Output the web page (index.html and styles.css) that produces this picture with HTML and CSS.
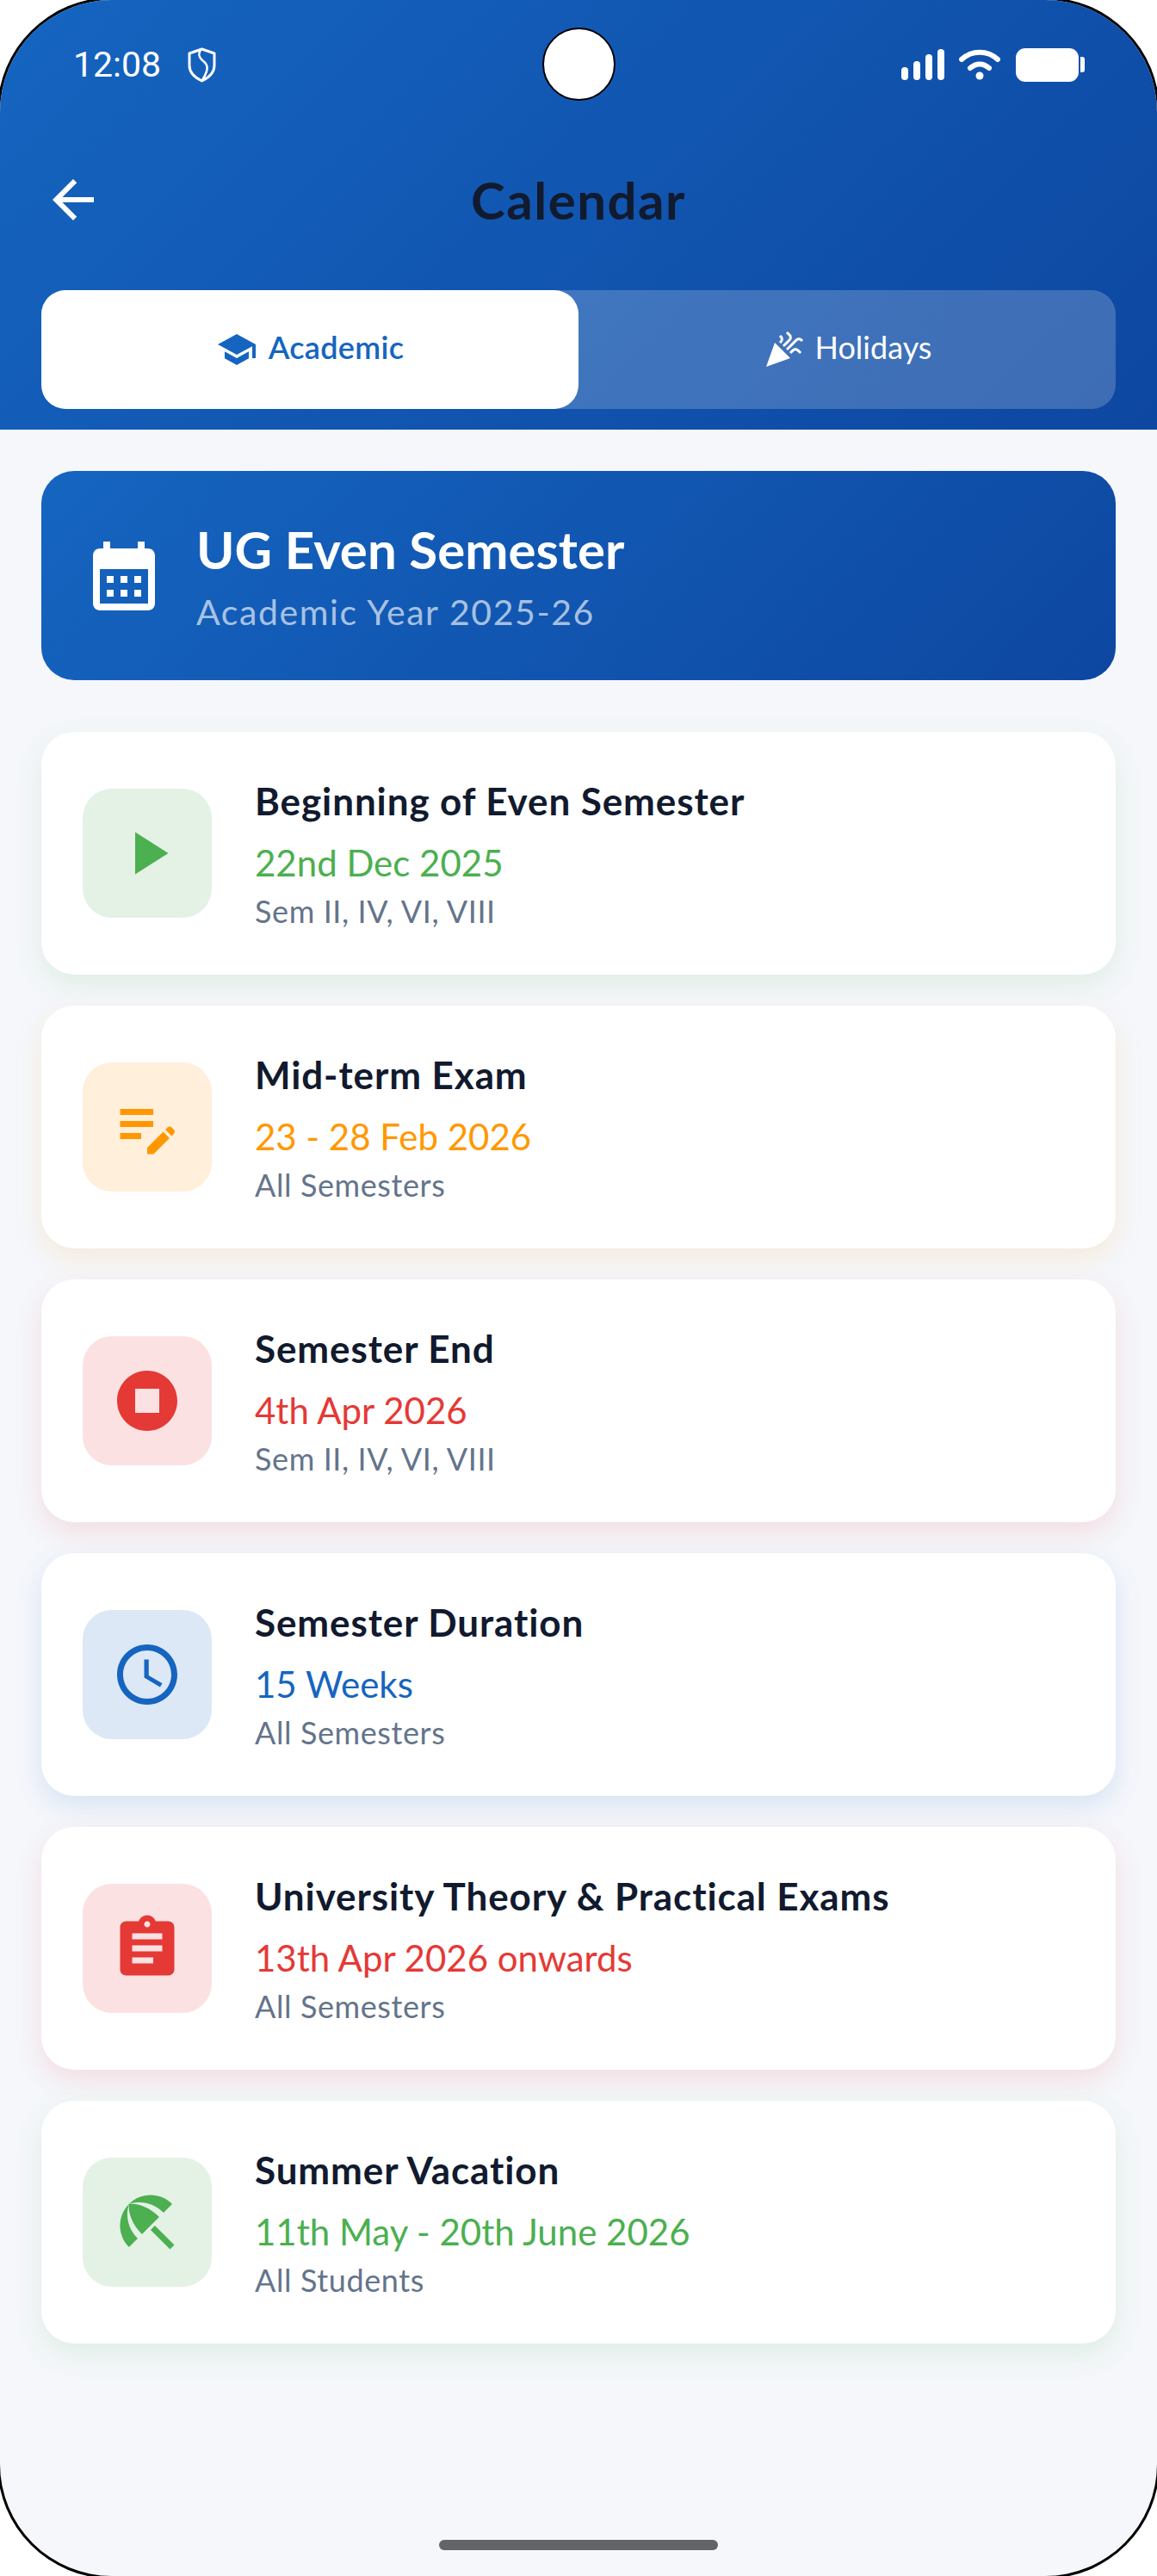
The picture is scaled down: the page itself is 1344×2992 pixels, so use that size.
FILE: index.html
```html
<!DOCTYPE html>
<html lang="en">
<head>
  <meta charset="UTF-8">
  <meta name="viewport" content="width=device-width, initial-scale=1.0">
  <title>Calendar</title>
  <link rel="stylesheet" href="styles.css">
</head>
<body>
<div class="phone">
  <div class="camera"></div>

  <header class="top">
    <div class="status">
      <div class="status-left">
        <span class="clock">12:08</span>
        <svg class="shield" viewBox="0 0 33 41" fill="none" stroke="#fff" stroke-width="3" stroke-linejoin="round" stroke-linecap="round">
          <path d="M16.5 2 31 7v14c0 8-6 14-14.500 18C8 35 2 29 2 21V7z"/>
          <path d="M15 3c-3 5-2 8 2 12 4 3 7 6 5 13-1 3-3 7-5 10" stroke-width="2.500"/>
        </svg>
      </div>
      <div class="status-right">
        <div class="signal">
          <span class="bar bar1"></span>
          <span class="bar bar2"></span>
          <span class="bar bar3"></span>
          <span class="bar bar4"></span>
        </div>
        <svg class="wifi" viewBox="0 0 48 36" fill="none" stroke="#fff" stroke-width="6" stroke-linecap="round">
          <path d="M3 12C15 1 33 1 45 12"/>
          <path d="M13 22c7-6 15-6 22 0"/>
          <circle cx="24" cy="31" r="4.500" fill="#fff" stroke="none"/>
        </svg>
        <div class="battery"></div>
        <div class="battery-nub"></div>
      </div>
    </div>

    <div class="toolbar">
      <svg class="back" viewBox="0 0 24 24"><path d="M20 11H7.830l5.590-5.590L12 4l-8 8 8 8 1.410-1.410L7.830 13H20v-2z"/></svg>
      <h1>Calendar</h1>
    </div>

    <div class="tabs">
      <div class="tab active">
        <svg viewBox="0 0 24 24"><path d="M5 13.180v4L12 21l7-3.820v-4L12 17l-7-3.820zM12 3L1 9l11 6 9-4.910V17h2V9L12 3z"/></svg>
        <span>Academic</span>
      </div>
      <div class="tab">
        <svg viewBox="0 0 24 24"><path d="M2 22l14-5-9-9zm12.530-9.470l5.590-5.590c.49-.49 1.280-.49 1.770 0l.59.59 1.060-1.060-.59-.59c-1.070-1.070-2.820-1.070-3.890 0l-5.590 5.590 1.060 1.060zm-4.470-5.650l-.59.59 1.060 1.060.59-.59c1.070-1.070 1.070-2.820 0-3.890l-.59-.59-1.060 1.070.59.59c.48.48.48 1.280 0 1.760zm7 5l-1.590 1.590 1.060 1.060 1.590-1.590c.49-.49 1.280-.49 1.770 0l1.610 1.610 1.060-1.060-1.610-1.610c-1.080-1.070-2.820-1.070-3.890 0zm-2-6l-3.590 3.590 1.060 1.060 3.590-3.590c1.070-1.070 1.070-2.820 0-3.890l-1.590-1.590-1.060 1.060 1.590 1.590c.48.490.48 1.290 0 1.770z"/></svg>
        <span>Holidays</span>
      </div>
    </div>
  </header>

  <main class="content">
    <section class="banner">
      <svg viewBox="0 0 24 24"><path d="M19 4h-1V2h-2v2H8V2H6v2H5c-1.110 0-1.990.9-1.990 2L3 20c0 1.100.89 2 2 2h14c1.100 0 2-.9 2-2V6c0-1.100-.9-2-2-2zm0 16H5V10h14v10zM9 14H7v-2h2v2zm4 0h-2v-2h2v2zm4 0h-2v-2h2v2zm-8 4H7v-2h2v2zm4 0h-2v-2h2v2zm4 0h-2v-2h2v2z"/></svg>
      <div>
        <h2>UG Even Semester</h2>
        <p>Academic Year 2025-26</p>
      </div>
    </section>

    <article class="card green">
      <div class="card-icon">
        <svg viewBox="0 0 24 24"><path d="M8 5v14l11-7z"/></svg>
      </div>
      <div class="card-text">
        <h3>Beginning of Even Semester</h3>
        <p class="date">22nd Dec 2025</p>
        <p class="who">Sem II, IV, VI, VIII</p>
      </div>
    </article>

    <article class="card orange">
      <div class="card-icon">
        <svg viewBox="0 0 24 24"><path d="M3 10h11v2H3v-2zM3 8h11V6H3v2zM3 16h7v-2H3v2zM18.010 12.870l.7-.7c.39-.39 1.020-.39 1.410 0l.71.71c.39.39.39 1.020 0 1.410l-.71.71-2.110-2.130zM17.300 13.580l-5.300 5.300V21h2.120l5.300-5.300-2.120-2.120z"/></svg>
      </div>
      <div class="card-text">
        <h3>Mid-term Exam</h3>
        <p class="date">23 - 28 Feb 2026</p>
        <p class="who">All Semesters</p>
      </div>
    </article>

    <article class="card red">
      <div class="card-icon">
        <svg viewBox="0 0 24 24"><path d="M12 2C6.480 2 2 6.480 2 12s4.480 10 10 10 10-4.480 10-10S17.520 2 12 2zm4 14H8V8h8v8z"/></svg>
      </div>
      <div class="card-text">
        <h3>Semester End</h3>
        <p class="date">4th Apr 2026</p>
        <p class="who">Sem II, IV, VI, VIII</p>
      </div>
    </article>

    <article class="card blue">
      <div class="card-icon">
        <svg viewBox="0 0 24 24"><path d="M11.990 2C6.470 2 2 6.480 2 12s4.470 10 9.990 10C17.520 22 22 17.520 22 12S17.520 2 11.990 2zM12 20c-4.420 0-8-3.580-8-8s3.580-8 8-8 8 3.580 8 8-3.580 8-8 8zm.5-13H11v6l5.250 3.150.75-1.230-4.500-2.670z"/></svg>
      </div>
      <div class="card-text">
        <h3>Semester Duration</h3>
        <p class="date">15 Weeks</p>
        <p class="who">All Semesters</p>
      </div>
    </article>

    <article class="card red">
      <div class="card-icon">
        <svg viewBox="0 0 24 24"><path d="M19 3h-4.180C14.400 1.840 13.300 1 12 1c-1.300 0-2.400.84-2.820 2H5c-1.100 0-2 .9-2 2v14c0 1.100.9 2 2 2h14c1.100 0 2-.9 2-2V5c0-1.100-.9-2-2-2zm-7 0c.55 0 1 .45 1 1s-.45 1-1 1-1-.45-1-1 .45-1 1-1zm2 14H7v-2h7v2zm3-4H7v-2h10v2zm0-4H7V7h10v2z"/></svg>
      </div>
      <div class="card-text">
        <h3>University Theory &amp; Practical Exams</h3>
        <p class="date">13th Apr 2026 onwards</p>
        <p class="who">All Semesters</p>
      </div>
    </article>

    <article class="card green">
      <div class="card-icon">
        <svg viewBox="0 0 24 24"><path d="M13.127 14.560l1.430-1.430 6.440 6.443L19.570 21zm4.293-5.730l2.860-2.860c-3.950-3.950-10.350-3.960-14.300-.02 3.930-1.300 8.310-.25 11.440 2.880zM5.950 5.980c-3.940 3.950-3.930 10.350.02 14.300l2.860-2.860C5.700 14.290 4.650 9.910 5.950 5.980zm.02-.02l-.01.01c-.38 3.010 1.170 6.880 4.300 10.020l5.730-5.730c-3.130-3.130-7.010-4.680-10.020-4.300z"/></svg>
      </div>
      <div class="card-text">
        <h3>Summer Vacation</h3>
        <p class="date">11th May - 20th June 2026</p>
        <p class="who">All Students</p>
      </div>
    </article>
  </main>

  <div class="home-bar"></div>
</div>
</body>
</html>
```

FILE: styles.css
```css
html, body {
  margin: 0;
  background-color: #ffffff;
}

h1, h2, h3, p {
  margin: 0;
}

/* black ring falls off canvas on straight edges, only the corners show */
.phone {
  position: relative;
  width: 1344px;
  height: 2992px;
  border-radius: 130px;
  box-shadow: 0 0 0 3px #000000;
  overflow: hidden;
  background-color: #f5f7fb;
  font-family: "Lato", "Noto Sans", sans-serif;
}

.camera {
  position: absolute;
  left: 630px;
  top: 32px;
  width: 85px;
  height: 85px;
  box-sizing: border-box;
  border: 2px solid #000000;
  border-radius: 50%;
  background-color: #ffffff;
}

.top {
  height: 499px;
  box-sizing: border-box;
  background: linear-gradient(135deg, #1565c0, #0d47a1);
}

.status {
  height: 150px;
  display: flex;
  align-items: center;
  justify-content: space-between;
  padding: 0 84px 0 85px;
}

.status-left {
  display: flex;
  align-items: center;
  gap: 31px;
}

.clock {
  font-family: "Roboto", sans-serif;
  font-size: 41px;
  color: #ffffff;
}

.shield {
  width: 33px;
  height: 41px;
}

.status-right {
  display: flex;
  align-items: center;
}

.signal {
  display: flex;
  align-items: flex-end;
  gap: 6px;
  height: 36px;
  margin-right: 17px;
}

.bar {
  width: 8px;
  border-radius: 4px;
  background-color: #ffffff;
}

.bar1 { height: 15px; }
.bar2 { height: 22px; }
.bar3 { height: 30px; }
.bar4 { height: 36px; }

.wifi {
  width: 48px;
  height: 36px;
  margin-right: 18px;
}

.battery {
  width: 73px;
  height: 39px;
  border-radius: 11px;
  background-color: #ffffff;
}

.battery-nub {
  width: 5px;
  height: 18px;
  margin-left: 2px;
  border-radius: 0 3px 3px 0;
  background-color: #ffffff;
}

.toolbar {
  height: 164px;
  margin-bottom: 23px;
  padding-left: 49px;
  display: grid;
  grid-template-columns: 72px 1fr 121px;
  align-items: center;
}

.back {
  width: 72px;
  height: 72px;
  fill: #ffffff;
}

.toolbar h1 {
  grid-column: 2;
  text-align: center;
  font-size: 60px;
  font-weight: 700;
  letter-spacing: 1.5px;
  color: #111a2e;
}

.tabs {
  display: flex;
  height: 138px;
  margin: 0 48px;
  border-radius: 28px;
  background-color: rgba(255, 255, 255, 0.2);
}

.tab {
  flex: 1;
  display: flex;
  align-items: center;
  justify-content: center;
  gap: 13px;
  border-radius: 28px;
  font-size: 36px;
  color: #ffffff;
}

.tab span {
  margin-bottom: 6px;
}

.tab svg {
  width: 48px;
  height: 48px;
  fill: currentColor;
}

.tab.active {
  background-color: #ffffff;
  color: #1565c0;
  font-weight: 600;
  letter-spacing: 0.3px;
}

.content {
  padding: 48px 48px 0;
}

.banner {
  height: 243px;
  margin-bottom: 60px;
  padding-left: 48px;
  display: flex;
  align-items: center;
  gap: 36px;
  border-radius: 38px;
  background: linear-gradient(135deg, #1565c0, #0d47a1);
  color: #ffffff;
}

.banner svg {
  width: 96px;
  height: 96px;
  fill: #ffffff;
}

.banner h2 {
  font-size: 60px;
  font-weight: 700;
  line-height: 72px;
}

.banner p {
  margin-top: 12px;
  font-size: 41px;
  letter-spacing: 1.6px;
  line-height: 50px;
  color: rgba(255, 255, 255, 0.65);
}

.card {
  height: 282px;
  margin-bottom: 36px;
  padding-left: 48px;
  box-sizing: border-box;
  display: flex;
  align-items: center;
  gap: 50px;
  border-radius: 38px;
  background-color: #ffffff;
}

.card-icon {
  width: 150px;
  height: 150px;
  display: flex;
  align-items: center;
  justify-content: center;
  border-radius: 34px;
}

.card-icon svg {
  width: 84px;
  height: 84px;
  fill: currentColor;
}

.card-text {
  padding-top: 6px;
}

.card h3 {
  font-size: 44px;
  font-weight: 700;
  letter-spacing: 0.9px;
  line-height: 56px;
  color: #111a2e;
}

.date {
  margin-top: 16px;
  font-size: 42px;
  line-height: 56px;
}

.who {
  font-size: 36px;
  letter-spacing: 0.6px;
  line-height: 56px;
  color: #64748b;
}

.green { box-shadow: 0 12px 32px rgba(76, 175, 80, 0.13); }
.green .card-icon { background-color: #e4f2e6; color: #4caf50; }
.green .date { color: #4caf50; }

.orange { box-shadow: 0 12px 32px rgba(255, 152, 0, 0.13); }
.orange .card-icon { background-color: #ffefdb; color: #ff9800; }
.orange .date { color: #ff9800; }

.red { box-shadow: 0 12px 32px rgba(229, 57, 53, 0.13); }
.red .card-icon { background-color: #fce1e2; color: #e53935; }
.red .date { color: #e53935; }

.blue { box-shadow: 0 12px 32px rgba(21, 101, 192, 0.13); }
.blue .card-icon { background-color: #dde8f6; color: #1565c0; }
.blue .date { color: #1565c0; }

.home-bar {
  position: absolute;
  left: 510px;
  top: 2950px;
  width: 324px;
  height: 12px;
  border-radius: 6px;
  background-color: #636466;
}
```
